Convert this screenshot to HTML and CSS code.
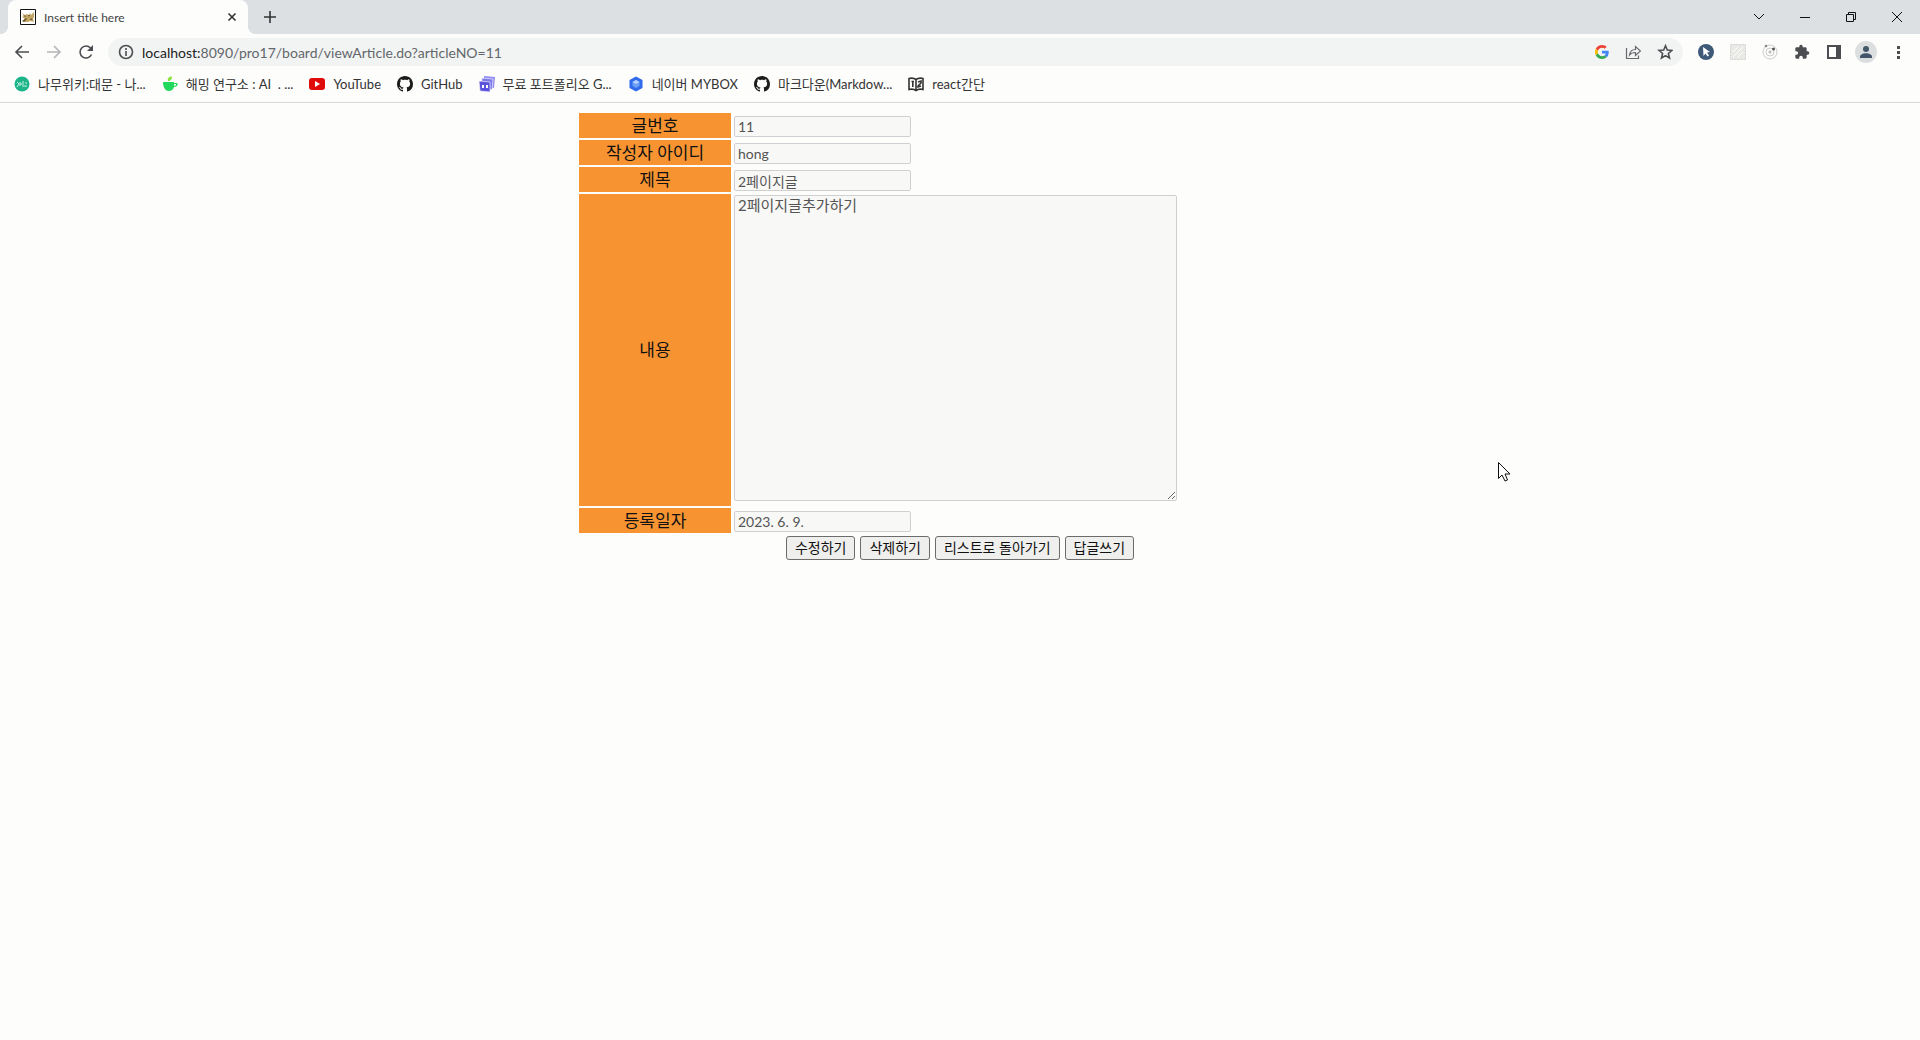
FILE: index.html
```html
<!DOCTYPE html>
<html lang="ko">
<head>
<meta charset="utf-8">
<title>Insert title here</title>
<link rel="stylesheet" href="styles.css">
</head>
<body>
<svg class="defs" width="0" height="0" aria-hidden="true">
  <symbol id="github" viewBox="0 0 16 16"><path d="M8 0C3.58 0 0 3.58 0 8c0 3.54 2.29 6.53 5.47 7.59.4.07.55-.17.55-.38 0-.19-.01-.82-.01-1.49-2.01.37-2.53-.49-2.69-.94-.09-.23-.48-.94-.82-1.13-.28-.15-.68-.52-.01-.53.63-.01 1.08.58 1.23.82.72 1.21 1.87.87 2.33.66.07-.52.28-.87.51-1.07-1.78-.2-3.64-.89-3.64-3.95 0-.87.31-1.59.82-2.15-.08-.2-.36-1.02.08-2.12 0 0 .67-.21 2.2.82.64-.18 1.32-.27 2-.27s1.36.09 2 .27c1.53-1.04 2.2-.82 2.2-.82.44 1.1.16 1.92.08 2.12.51.56.82 1.27.82 2.15 0 3.07-1.87 3.75-3.65 3.95.29.25.54.73.54 1.48 0 1.07-.01 1.93-.01 2.2 0 .21.15.46.55.38A8.01 8.01 0 0 0 16 8c0-4.42-3.58-8-8-8z"/></symbol>
</svg>
<header class="browser">
  <div class="tabstrip">
    <div class="tab">
      <svg class="i16" viewBox="0 0 16 16"><path fill="#fff" stroke="#111" d="M.5.5h15v15H.5z"/><path fill="#c4a765" d="M2 4l3 2 2-1 2 1 1-2 1 2 3-3v5l-1 2 1 3-4-1-2 1H3l2-3-3-2 2-1z"/><path fill="#6b5a34" d="M2 12l4-3 1 1-3 3zM8 6l2 0-1 2zM11 9l2 2h-3zM3 6l3 1-1 1z"/></svg>
      <span class="tab-title">Insert title here</span>
      <button class="plain" aria-label="탭 닫기"><svg class="i16" viewBox="0 0 16 16"><path class="line dark" d="M4.500 4.500l7 7m0-7l-7 7"/></svg></button>
    </div>
    <button class="plain newtab" aria-label="새 탭"><svg class="i16" viewBox="0 0 16 16"><path class="line dark" d="M8 2v12M2 8h12"/></svg></button>
    <div class="window">
      <button class="plain" aria-label="탭 검색"><svg class="i16" viewBox="0 0 16 16"><path class="line thin" d="M3 5l5 5 5-5"/></svg></button>
      <button class="plain" aria-label="최소화"><svg class="i16" viewBox="0 0 16 16"><path class="line thin" d="M3 8.500h10"/></svg></button>
      <button class="plain" aria-label="이전 크기로 복원"><svg class="i16" viewBox="0 0 16 16"><path class="line thin" d="M3.500 5.500h7v7h-7zM5.500 5.500v-2h7v7h-2"/></svg></button>
      <button class="plain" aria-label="닫기"><svg class="i16" viewBox="0 0 16 16"><path class="line thin" d="M3 3l10 10M13 3L3 13"/></svg></button>
    </div>
  </div>
  <div class="toolbar">
    <div class="navigation">
      <button class="plain" aria-label="뒤로"><svg class="i16" viewBox="0 0 16 16"><path class="line" d="M15 8H2m6-6L2 8l6 6"/></svg></button>
      <button class="plain" aria-label="앞으로"><svg class="i16" viewBox="0 0 16 16"><path class="line faint" d="M1 8h13M8 2l6 6-6 6"/></svg></button>
      <button class="plain" aria-label="새로고침"><svg class="i16" viewBox="0 0 16 16"><path class="line" d="M13.500 10.500A6 6 0 1 1 12.500 4l1.500 2"/><path fill="#4b4d50" d="M15 1v6H9z"/></svg></button>
    </div>
    <div class="omnibox">
      <svg class="i16" viewBox="0 0 16 16"><circle class="line" cx="8" cy="8" r="6.500"/><path class="line" d="M8 7v5M8 4v2"/></svg>
      <p class="url"><b>localhost:</b>8090/pro17/board/viewArticle.do?articleNO=11</p>
      <svg class="i14" viewBox="0 0 48 48"><path fill="#ea4335" d="M24 9.500c3.540 0 6.710 1.220 9.210 3.600l6.850-6.850C35.900 2.380 30.470 0 24 0 14.620 0 6.510 5.380 2.560 13.220l7.980 6.190C12.430 13.720 17.740 9.500 24 9.500z"/><path fill="#4285f4" d="M46.980 24.550c0-1.570-.15-3.090-.38-4.550H24v9.020h12.940c-.58 2.960-2.260 5.480-4.780 7.180l7.730 6c4.510-4.180 7.090-10.360 7.090-17.650z"/><path fill="#fbbc05" d="M10.530 28.590A14.500 14.500 0 0 1 10.530 19.410l-7.980-6.190a24 24 0 0 0 0 21.560z"/><path fill="#34a853" d="M24 48c6.480 0 11.930-2.130 15.890-5.810l-7.730-6c-2.150 1.450-4.920 2.300-8.160 2.300-6.260 0-11.570-4.220-13.470-9.910l-7.980 6.190C6.510 42.620 14.620 48 24 48z"/></svg>
      <button class="plain" aria-label="공유"><svg class="i16" viewBox="0 0 16 16"><path class="line soft" d="M1.500 4v10.500h12v-3M4.500 11c.5-4 2.500-5.500 6-5.500V2.500l5 4.500-5 4.500v-3c-3 0-4.500.5-6 2.500z"/></svg></button>
      <button class="plain" aria-label="북마크"><svg class="i16" viewBox="0 0 16 16"><path class="line" d="M8.500 1.800l1.800 4.200 4.700.4-3.600 3.100 1.100 4.500-4-2.400-4 2.400 1.100-4.500L2 6.400 6.700 6z"/></svg></button>
    </div>
    <div class="extensions">
      <svg class="i16" viewBox="0 0 16 16"><circle cx="8" cy="8" r="8" fill="#3f5a78"/><path fill="#fff" d="M5 3l7 5-3 .5 2 3-1.500 1-2-3L5.500 12z"/></svg>
      <svg class="i16" viewBox="0 0 16 16"><path fill="#e9e9e6" stroke="#d2d2d2" stroke-dasharray="2 1" d="M.5.5h15v15H.5z"/><path fill="none" stroke="#fff" d="M3 13L13 3M3 8l5-5M8 13l5-5"/></svg>
      <svg class="i16" viewBox="0 0 16 16"><circle cx="8" cy="8" r="7" fill="none" stroke="#ccc"/><circle cx="8" cy="8" r="4" fill="none" stroke="#ccc"/><circle cx="8" cy="8" r="1.500" fill="#bbb"/><circle cx="4" cy="2" r="1.300" fill="#888"/><circle cx="11.500" cy="5" r="1.500" fill="#555"/></svg>
      <svg class="i16" viewBox="0 0 24 24"><path fill="#4b4d50" d="M20.500 11H19V7c0-1.100-.9-2-2-2h-4V3.500a2.500 2.500 0 0 0-5 0V5H4c-1.100 0-2 .9-2 2v3.800h1.500a2.700 2.700 0 0 1 0 5.400H2V20c0 1.100.9 2 2 2h3.800v-1.500a2.700 2.700 0 0 1 5.400 0V22H17c1.100 0 2-.9 2-2v-4h1.500a2.500 2.500 0 0 0 0-5z"/></svg>
      <svg class="i16" viewBox="0 0 16 16"><path fill="#4b4d50" d="M1 1h14v14H1z"/><path fill="#fdfdfc" d="M3 3h7v10H3z"/></svg>
      <svg class="avatar" viewBox="0 0 22 22"><circle cx="11" cy="11" r="11" fill="#dcdfe0"/><circle cx="11" cy="8" r="3" fill="#44566a"/><path fill="#44566a" d="M5 16c0-5 12-5 12 0v1H5z"/></svg>
      <svg class="i16" viewBox="0 0 16 16"><path fill="#4b4d50" d="M7 2h3v3H7zM7 7h3v3H7zM7 12h3v3H7z"/></svg>
    </div>
  </div>
  <nav class="bookmarks">
    <a href="#"><svg class="i16" viewBox="0 0 16 16"><circle cx="8" cy="8" r="7.500" fill="#1db488"/><path fill="none" stroke="#c9f2e4" d="M3 6l2 2-2 3m3-5v4m0-2h2m1-3v6m2-4h2m-3 3h3"/></svg>나무위키:대문 - 나...</a>
    <a href="#"><svg class="i16" viewBox="0 0 16 16"><path fill="#20d95c" d="M1 6h11v1h2.500c2 0 1.500 4-2.500 4-1 3-3 4-5.500 4S1 12 1 6z"/><path fill="#fdfdfc" d="M12 8h1.500c1 0 .5 2-1.300 2z"/><path fill="#8be33c" d="M6 5c-1-3 1-4.500 4-4.500C10 3 9 5 6 5z"/></svg>해밍 연구소 : AI&nbsp; . ...</a>
    <a href="#"><svg class="i16" viewBox="0 0 16 16"><rect y="2" width="16" height="12" rx="3" fill="#e00b0b"/><path fill="#fff" d="M6 5l5 3-5 3z"/></svg>YouTube</a>
    <a href="#"><svg class="i16 mark"><use href="#github"/></svg>GitHub</a>
    <a href="#"><svg class="i16" viewBox="0 0 16 16"><path fill="#8f8cf0" d="M5 0l11 1-1 11-10-1z"/><path fill="#7f7be8" stroke="#fff" stroke-width=".6" d="M3 2l11 1-1 11-11-2z"/><path fill="#5a54dc" stroke="#fff" stroke-width=".6" d="M0 5l11 1v10L1 15z"/><path fill="#fff" d="M3 9h2v3H3zM7 9h2v3H7z"/></svg>무료 포트폴리오 G...</a>
    <a href="#"><svg class="i16" viewBox="0 0 16 16"><path fill="#2f6bea" d="M8 .5l6.500 3.500v8L8 15.500 1.500 12V4z"/><path fill="#6d9ff8" d="M8 4l3.500 2v4L8 12l-3.500-2V6z"/><path fill="#b8d2fd" d="M8 4l3.500 2L8 8 4.500 6z"/></svg>네이버 MYBOX</a>
    <a href="#"><svg class="i16 mark"><use href="#github"/></svg>마크다운(Markdow...</a>
    <a href="#"><svg class="i16" viewBox="0 0 16 16"><path fill="none" stroke="#333" stroke-width="1.600" d="M8 3.500C6 2 3 2 1 2.500v11c2-.5 5-.5 7 1 2-1.500 5-1.500 7-1v-11c-2-.5-5-.5-7 1zm0 0v11M3.500 5.500H6M4.800 5.500V11M10 6l3-1v2l-3 3v1l3-1"/></svg>react간단</a>
  </nav>
</header>
<main>
  <form>
    <table class="article">
      <tr><th scope="row"><label for="no">글번호</label></th><td><input id="no" type="text" value="11" disabled></td></tr>
      <tr><th scope="row"><label for="writer">작성자 아이디</label></th><td><input id="writer" type="text" value="hong" disabled></td></tr>
      <tr><th scope="row"><label for="title">제목</label></th><td><input id="title" type="text" value="2페이지글" disabled></td></tr>
      <tr><th scope="row"><label for="content">내용</label></th><td><textarea id="content" disabled>2페이지글추가하기</textarea></td></tr>
      <tr><th scope="row"><label for="date">등록일자</label></th><td><input id="date" type="text" value="2023. 6. 9." disabled></td></tr>
      <tr><td colspan="2"><div class="actions"><button type="button">수정하기</button><button type="button">삭제하기</button><button type="button">리스트로 돌아가기</button><button type="button">답글쓰기</button></div></td></tr>
    </table>
  </form>
</main>
<svg class="pointer" viewBox="0 0 13 20" aria-hidden="true"><path fill="#fff" stroke="#111" d="M.5.500v16l3.500-3.500 3 6 2.500-1-2.500-6h5z"/></svg>
</body>
</html>
```
FILE: styles.css
```css
* { box-sizing: border-box; }

body {
  margin: 0;
  background: #fdfdfc;
  color: #111;
  font-family: Lato, "Noto Sans CJK KR", sans-serif;
  font-size: 12px;
  font-weight: 400;
}

svg { display: block; flex: none; }
.defs { position: absolute; }
.i16 { width: 16px; height: 16px; }
.i14 { width: 14px; height: 14px; }
.mark { fill: #1c1c1c; }

.line { fill: none; stroke: #4b4d50; stroke-width: 1.6; }
.dark { stroke: #333; }
.thin { stroke: #111; stroke-width: 1; }
.faint { stroke: #b4b5b6; }
.soft { stroke: #66686a; stroke-width: 1.2; }

.plain {
  display: flex;
  padding: 0;
  border: 0;
  background: none;
}

.tabstrip {
  display: flex;
  align-items: center;
  height: 34px;
  padding-left: 8px;
  background: #dce0e3;
}

.tab {
  position: relative;
  display: flex;
  align-items: center;
  gap: 8px;
  width: 240px;
  height: 34px;
  padding: 0 8px 0 12px;
  border-radius: 8px 8px 0 0;
  background: #fdfdfc;
}

.tab::before,
.tab::after {
  content: "";
  position: absolute;
  bottom: 0;
  width: 8px;
  height: 8px;
}

.tab::before { right: 100%; background: radial-gradient(circle at 0 0, #dce0e3 8px, #fdfdfc 8px); }
.tab::after { left: 100%; background: radial-gradient(circle at 100% 0, #dce0e3 8px, #fdfdfc 8px); }

.tab-title { flex: 1; color: #444; }
.newtab { margin-left: 14px; }
.window { display: flex; gap: 30px; margin-left: auto; padding-right: 15px; }

.toolbar {
  display: flex;
  align-items: center;
  height: 36px;
  padding: 0 14px;
}

.navigation { display: flex; gap: 16px; margin-right: 14px; }

.omnibox {
  display: flex;
  flex: 1;
  align-items: center;
  gap: 16px;
  height: 28px;
  padding: 0 10px;
  border-radius: 14px;
  background: #f2f4f4;
}

.url { flex: 1; margin: 0 0 0 -8px; color: #63676a; font-size: 14px; }
.url b { color: #222; font-weight: 400; }

.extensions { display: flex; align-items: center; gap: 16px; margin-left: 15px; }
.avatar { width: 22px; height: 22px; margin: 0 -3px; }

.bookmarks {
  display: flex;
  align-items: center;
  gap: 16px;
  height: 33px;
  padding: 0 14px 5px;
  border-bottom: 1px solid #d8d9d6;
  font-size: 13px;
}

.bookmarks a {
  display: flex;
  align-items: center;
  gap: 8px;
  color: #333;
  text-decoration: none;
  white-space: nowrap;
}

main { padding: 8px; }

.article {
  width: 100%;
  max-width: 766px;
  margin: 0 auto;
  border-spacing: 2px;
}

.article th,
.article td { padding: 1px; }

.article th {
  width: 152px;
  background: #f79431;
  font-size: 17px;
  font-weight: 400;
  line-height: 22px;
}

.article input,
.article textarea {
  display: block;
  border: 1px solid #cfd0d2;
  border-radius: 2px;
  background: #f8f8f7;
  color: #545454;
  font-family: inherit;
  font-size: 14px;
}

.article input { width: 177px; height: 21px; margin-top: 2px; padding: 0 3px; }
.article textarea { width: 443px; height: 306px; margin-bottom: 4px; padding: 0 3px; font-size: 15px; line-height: 18px; }

.actions { display: flex; justify-content: center; gap: 5px; }

.actions button {
  height: 24px;
  padding: 0 8px;
  border: 1px solid #6c6c6c;
  border-radius: 3px;
  background: #efefee;
  color: #111;
  font-family: inherit;
  font-size: 14px;
  line-height: 20px;
}

.pointer {
  position: absolute;
  top: 462px;
  left: 1498px;
  width: 13px;
  height: 20px;
}
```
